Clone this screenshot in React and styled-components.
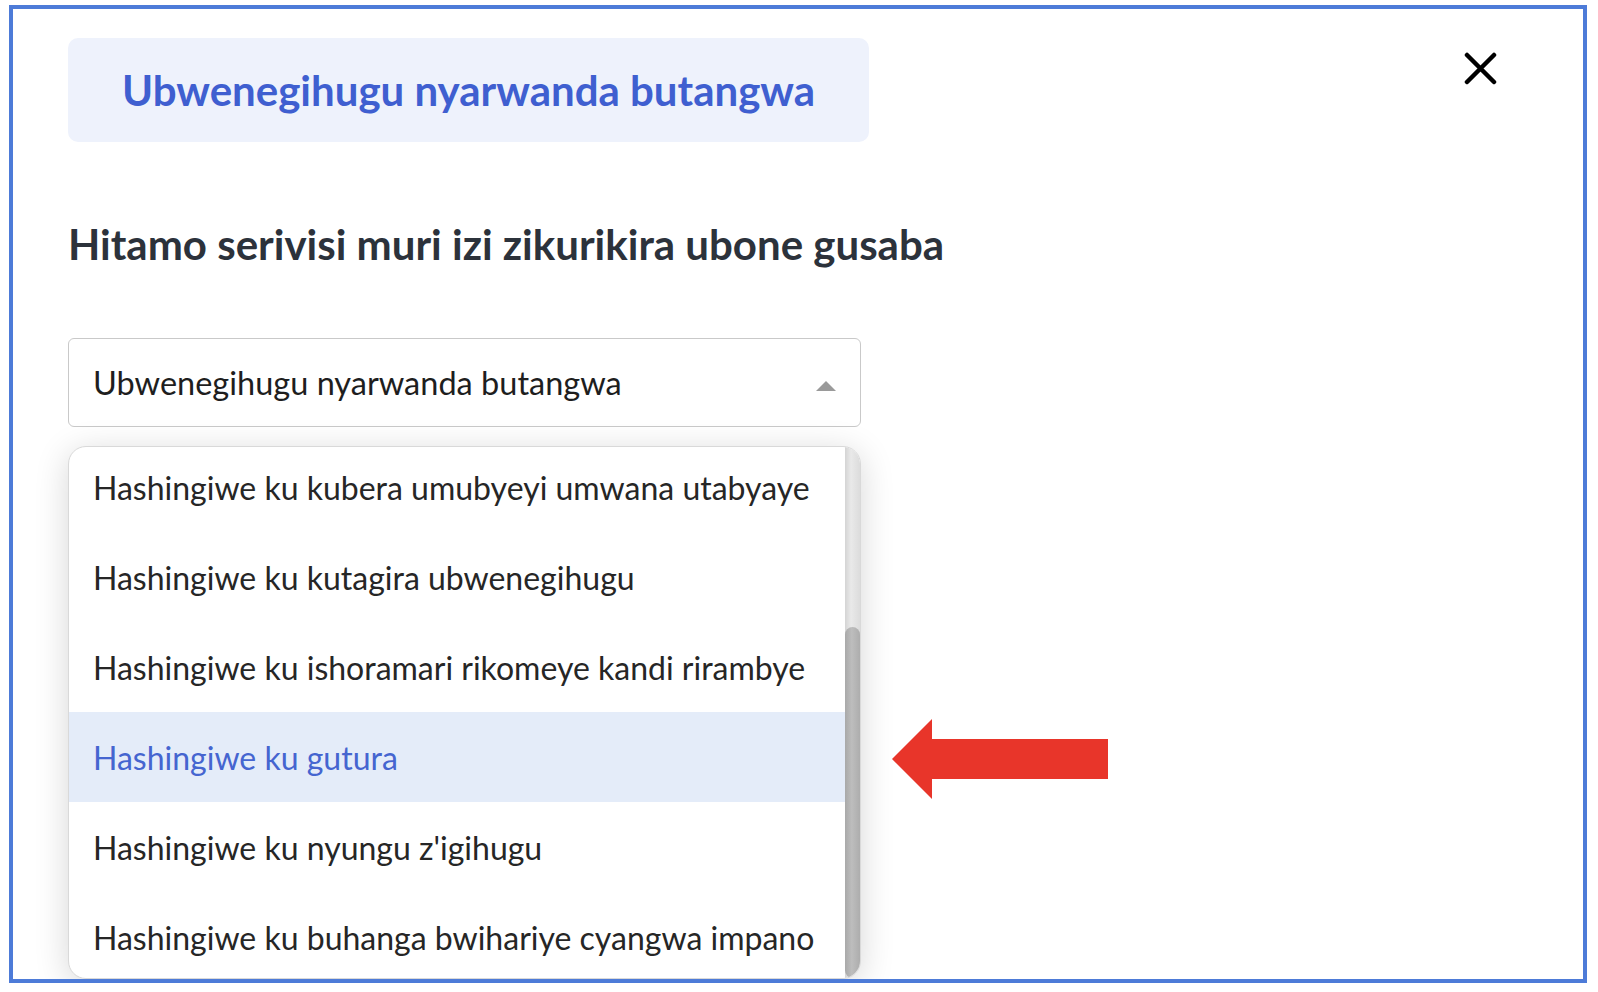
import React from "react";
import styled, { createGlobalStyle } from "styled-components";

const GlobalStyle = createGlobalStyle`
  html, body {
    margin: 0;
    padding: 0;
    background: #ffffff;
  }
  body {
    font-family: Lato, "Liberation Sans", sans-serif;
    -webkit-font-smoothing: antialiased;
  }
`;

const Frame = styled.div`
  box-sizing: border-box;
  margin: 5px 0 0 9px;
  width: 1578px;
  height: 978px;
  border: 4px solid #4d7bd8;
  overflow: hidden;
  padding: 29px 86px 0 55px;
  background: #fff;
`;

const Header = styled.div`
  display: flex;
  justify-content: space-between;
  align-items: flex-start;
`;

const TitleBox = styled.div`
  width: 801px;
  height: 104px;
  border-radius: 10px;
  background: #eef2fc;
  display: flex;
  align-items: center;
  justify-content: center;
`;

const Title = styled.h1`
  margin: 0;
  font-size: 42px;
  font-weight: 700;
  color: #3f5fd0;
`;

const CloseButton = styled.button`
  margin-top: 14px;
  width: 33px;
  height: 33px;
  padding: 0;
  border: none;
  background: none;
  cursor: pointer;
  display: flex;
`;

const Heading = styled.h2`
  margin: 77px 0 0;
  font-size: 42px;
  line-height: 50px;
  font-weight: 700;
  color: #2c323b;
`;

const Select = styled.div`
  box-sizing: border-box;
  margin-top: 69px;
  width: 793px;
  height: 89px;
  border: 1.5px solid #c9c9c9;
  border-radius: 6px;
  padding: 0 24px;
  display: flex;
  align-items: center;
  justify-content: space-between;
  font-size: 32.5px;
  color: #1e1e1e;
`;

const Caret = styled.span`
  width: 0;
  height: 0;
  border-left: 10px solid transparent;
  border-right: 10px solid transparent;
  border-bottom: 10px solid #9a9a9a;
  margin-top: 6px;
`;

const DropdownRow = styled.div`
  display: flex;
  align-items: flex-start;
  gap: 31px;
  margin-top: 19px;
`;

const Dropdown = styled.div`
  box-sizing: border-box;
  width: 793px;
  height: 533px;
  display: flex;
  border: 1px solid #d9d9d9;
  border-radius: 18px;
  overflow: hidden;
  background: #fff;
  box-shadow: 0 6px 34px rgba(0, 0, 0, 0.16);
`;

const List = styled.ul`
  flex: 1;
  margin: -5px 0 0;
  padding: 0;
  list-style: none;
`;

const Option = styled.li`
  height: 90px;
  padding-left: 24px;
  display: flex;
  align-items: center;
  font-size: 32px;
  color: ${(p) => (p.$active ? "#4565d0" : "#262626")};
  background: ${(p) => (p.$active ? "#e4ecf9" : "transparent")};
`;

const ScrollTrack = styled.div`
  width: 15px;
  background: linear-gradient(to right, #d4d4d4, #e9e9e9 40%, #dcdcdc);
  border-top-right-radius: 18px;
  display: flex;
  flex-direction: column;
  padding-top: 180px;
`;

const ScrollThumb = styled.div`
  flex: 1;
  border-radius: 8px;
  background: linear-gradient(to right, #a9a9a9, #bdbdbd 45%, #adadad);
`;

const Arrow = styled.svg`
  margin-top: 273px;
  flex-shrink: 0;
`;

const options = [
  "Hashingiwe ku kubera umubyeyi umwana utabyaye",
  "Hashingiwe ku kutagira ubwenegihugu",
  "Hashingiwe ku ishoramari rikomeye kandi rirambye",
  "Hashingiwe ku gutura",
  "Hashingiwe ku nyungu z'igihugu",
  "Hashingiwe ku buhanga bwihariye cyangwa impano",
];

const App = () => {
  return (
    <>
      <GlobalStyle />
      <Frame>
        <Header>
          <TitleBox>
            <Title>Ubwenegihugu nyarwanda butangwa</Title>
          </TitleBox>
          <CloseButton aria-label="close">
            <svg width="33" height="33" viewBox="0 0 33 33">
              <path
                d="M3 3 L30 30 M30 3 L3 30"
                stroke="#000"
                strokeWidth="4.5"
                strokeLinecap="round"
              />
            </svg>
          </CloseButton>
        </Header>

        <Heading>Hitamo serivisi muri izi zikurikira ubone gusaba</Heading>

        <Select>
          <span>Ubwenegihugu nyarwanda butangwa</span>
          <Caret />
        </Select>

        <DropdownRow>
          <Dropdown>
            <List>
              {options.map((o) => (
                <Option key={o} $active={o === "Hashingiwe ku gutura"}>
                  {o}
                </Option>
              ))}
            </List>
            <ScrollTrack>
              <ScrollThumb />
            </ScrollTrack>
          </Dropdown>
          <Arrow width="216" height="80" viewBox="0 0 216 80">
            <polygon
              points="0,40 40,0 40,20 216,20 216,60 40,60 40,80"
              fill="#e8352a"
            />
          </Arrow>
        </DropdownRow>
      </Frame>
    </>
  );
};

export default App;
